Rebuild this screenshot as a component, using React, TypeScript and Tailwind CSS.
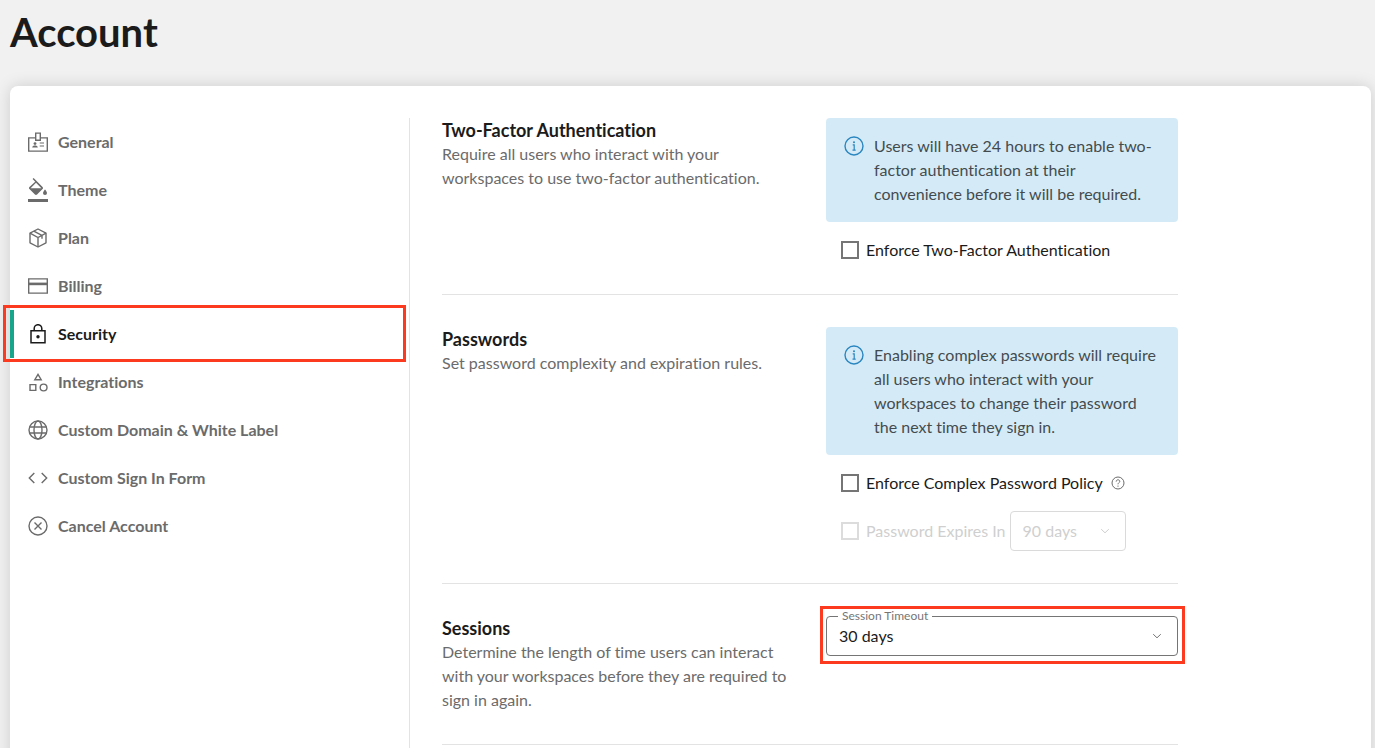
import React, { useState } from 'react';

interface NavItem {
  label: string;
  icon: React.ReactNode;
}

interface IconProps {
  children: React.ReactNode;
}

const Icon: React.FC<IconProps> = ({ children }) => (
  <svg width="20" height="20" viewBox="0 0 20 20" fill="none" stroke="currentColor" strokeWidth="1.4" aria-hidden="true">
    {children}
  </svg>
);

const navItems: NavItem[] = [
  {
    label: 'General',
    icon: (
      <Icon>
        <path d="M7.7 5.9H.7v13.2h18.6V5.9h-7" />
        <path d="M7.7 1.1h4.6v7.2H7.7z" />
        <circle cx="7" cy="11.6" r="1.4" fill="currentColor" stroke="none" />
        <path d="M4.2 15.5c.2-1.5 1.4-2 2.8-2s2.6.5 2.8 2z" fill="currentColor" stroke="none" />
        <path d="M11.7 11h4.3M11.7 14h4.3" strokeWidth="1.2" />
      </Icon>
    ),
  },
  {
    label: 'Theme',
    icon: (
      <svg width="20" height="24" viewBox="2 0 20 24" fill="currentColor" aria-hidden="true">
        <path d="M16.56 8.94 7.62 0 6.6 1.02l2.6 2.7-5.76 5.22c-.59.59-.59 1.54 0 2.12l5.5 5.5c.59.59 1.53.59 2.12 0l5.5-5.5c.59-.58.59-1.53 0-2.12zM4.6 10.2 10 4.7l5.4 5.5z" />
        <path d="M19 11.5s-2 2.17-2 3.5a2 2 0 0 0 4 0c0-1.33-2-3.5-2-3.5z" />
        <path d="M2 21h20v3H2z" />
      </svg>
    ),
  },
  {
    label: 'Plan',
    icon: (
      <Icon>
        <path d="m10 1 8 4.2v9.6L10 19l-8-4.200V5.200z" strokeLinejoin="round" />
        <path d="m2 5.200 8 4.300 8-4.300M10 9.500V19M5.800 3.200l8.200 4.300v3.300" />
      </Icon>
    ),
  },
  {
    label: 'Billing',
    icon: (
      <Icon>
        <path d="M.7 2.9h18.6v14.200H.7z" />
        <path d="M.7 7.9h18.600" strokeWidth="2.600" />
      </Icon>
    ),
  },
  {
    label: 'Security',
    icon: (
      <Icon>
        <path d="M3 6.700h14v12.100H3z" strokeWidth="1.500" />
        <path d="M6.200 6.700V4.500a3.800 3.800 0 0 1 7.600 0v2.200" strokeWidth="1.500" />
        <circle cx="10" cy="12.800" r="1.700" fill="currentColor" stroke="none" />
      </Icon>
    ),
  },
  {
    label: 'Integrations',
    icon: (
      <Icon>
        <path d="m10 2.300 3.200 5.400H6.800z" />
        <path d="M2 12.600h5.800v5.800H2z" />
        <circle cx="15.600" cy="15.500" r="3.400" />
      </Icon>
    ),
  },
  {
    label: 'Custom Domain & White Label',
    icon: (
      <Icon>
        <circle cx="10" cy="10" r="9" />
        <ellipse cx="10" cy="10" rx="4" ry="9" />
        <path d="M1.600 7h16.800M1.600 13h16.800" />
      </Icon>
    ),
  },
  {
    label: 'Custom Sign In Form',
    icon: (
      <Icon>
        <path d="M6.300 4.900 1.300 10l5 5.100M13.700 4.900l5 5.100-5 5.100" />
      </Icon>
    ),
  },
  {
    label: 'Cancel Account',
    icon: (
      <Icon>
        <circle cx="10" cy="10" r="9" />
        <path d="m6.500 6.500 7 7M13.500 6.500l-7 7" />
      </Icon>
    ),
  },
];

const Chevron = () => (
  <svg
    className="pointer-events-none absolute top-1/2 right-4 -translate-y-1/2"
    width="10"
    height="10"
    viewBox="0 0 10 10"
    fill="none"
    stroke="currentColor"
    aria-hidden="true"
  >
    <path d="M1.200 3.200 5 6.800l3.800-3.600" />
  </svg>
);

const Callout: React.FC<{ children: React.ReactNode }> = ({ children }) => (
  <div className="mb-4 flex gap-2.5 rounded bg-[#d4ebf7] py-4 pr-4 pl-[18px] text-[#444b4f]">
    <svg
      className="mt-0.5 shrink-0 text-[#2a86c0]"
      width="20"
      height="20"
      viewBox="0 0 20 20"
      fill="none"
      stroke="currentColor"
      strokeWidth="1.4"
      aria-hidden="true"
    >
      <circle cx="10" cy="10" r="9" />
      <path d="M8.700 8.800h1.500v5.400M8.500 14.200h3.200" strokeWidth="1.200" />
      <circle cx="10" cy="6.200" r="1" fill="currentColor" stroke="none" />
    </svg>
    <p>{children}</p>
  </div>
);

interface SectionProps {
  title: string;
  description: string;
  children: React.ReactNode;
}

const Section: React.FC<SectionProps> = ({ title, description, children }) => (
  <section className="mb-8 grid grid-cols-2 gap-8 border-b border-[#e3e3e3] pb-8">
    <div>
      <h2 className="text-lg leading-6 font-bold text-[#1b1b1b]">{title}</h2>
      <p>{description}</p>
    </div>
    <div>{children}</div>
  </section>
);

const checkboxClass =
  'size-[18px] shrink-0 appearance-none border-2 border-[#757575] bg-white checked:bg-[#17a58c] disabled:border-[#dcdcdc]';

export default function App() {
  const [active, setActive] = useState('Security');
  const [complex, setComplex] = useState(false);
  const [timeout, setTimeoutValue] = useState('30 days');

  return (
    <div className="flex min-h-screen flex-col bg-[#f1f1f1] pr-1 pl-2.5 font-['Lato',sans-serif] text-base leading-6 text-[#6b6b6b] [font-variant-ligatures:none]">
      <h1 className="pt-2 pb-[30px] text-[40px] leading-12 font-bold text-[#1b1b1b]">Account</h1>

      <main className="flex flex-1 rounded-t-lg bg-white pt-8 shadow-[0_0_16px_rgba(0,0,0,0.15)]">
        <nav className="w-[400px] shrink-0 border-r border-[#e3e3e3]" aria-label="Account settings">
          {navItems.map(({ label, icon }) => {
            const isActive = label === active;
            return (
              <a
                key={label}
                href="#"
                onClick={() => setActive(label)}
                aria-current={isActive ? 'page' : undefined}
                className={`relative flex h-12 items-center gap-2.5 border-l-4 pl-3.5 font-bold ${
                  isActive ? 'border-[#17a58c] text-[#1b1b1b]' : 'border-transparent'
                }`}
              >
                {icon}
                {label}
                {isActive && (
                  <span className="pointer-events-none absolute -top-[5px] right-[3px] -bottom-1 -left-[11px] border-3 border-[#fb3a20]" />
                )}
              </a>
            );
          })}
        </nav>

        <div className="ml-8 w-full max-w-[736px]">
          <Section
            title="Two-Factor Authentication"
            description="Require all users who interact with your workspaces to use two-factor authentication."
          >
            <Callout>
              Users will have 24 hours to enable two-factor authentication at their convenience before it will be required.
            </Callout>
            <label className="flex items-center gap-[7px] pl-[15px] text-[#1b1b1b]">
              <input type="checkbox" className={checkboxClass} />
              Enforce Two-Factor Authentication
            </label>
          </Section>

          <Section title="Passwords" description="Set password complexity and expiration rules.">
            <Callout>
              Enabling complex passwords will require all users who interact with your workspaces to change their password
              the next time they sign in.
            </Callout>
            <div className="mb-4 flex items-center gap-2 pl-[15px]">
              <label className="flex items-center gap-[7px] text-[#1b1b1b]">
                <input
                  type="checkbox"
                  checked={complex}
                  onChange={(e) => setComplex(e.target.checked)}
                  className={checkboxClass}
                />
                Enforce Complex Password Policy
              </label>
              <svg width="14" height="14" viewBox="0 0 14 14" fill="none" stroke="currentColor" aria-hidden="true">
                <circle cx="7" cy="7" r="6" />
                <path d="M5.200 5.600c0-1.100.8-1.800 1.800-1.800s1.800.6 1.800 1.600C8.800 6.600 7 6.700 7 8.300" />
                <circle cx="7" cy="10.100" r=".7" fill="currentColor" stroke="none" />
              </svg>
            </div>
            <div className="flex items-center gap-1 pl-[15px] text-[#cfcfcf]">
              <label className="flex items-center gap-[7px]">
                <input type="checkbox" disabled className={checkboxClass} />
                Password Expires In
              </label>
              <div className="relative">
                <select
                  disabled
                  aria-label="Password expiration"
                  className="h-10 w-[116px] appearance-none rounded border border-[#dadada] bg-white px-3 opacity-100"
                >
                  <option>90 days</option>
                </select>
                <Chevron />
              </div>
            </div>
          </Section>

          <Section
            title="Sessions"
            description="Determine the length of time users can interact with your workspaces before they are required to sign in again."
          >
            <div className="relative text-[#757575]">
              <label htmlFor="session-timeout" className="absolute -top-2 left-3 bg-white px-1 text-xs leading-4">
                Session Timeout
              </label>
              <select
                id="session-timeout"
                value={timeout}
                onChange={(e) => setTimeoutValue(e.target.value)}
                className="block h-10 w-full appearance-none rounded border border-[#757575] bg-white px-3 text-[#1b1b1b]"
              >
                <option>1 day</option>
                <option>7 days</option>
                <option>30 days</option>
              </select>
              <Chevron />
              <span className="pointer-events-none absolute -top-2.5 -right-[7px] -bottom-2 -left-1.5 border-3 border-[#fb3a20]" />
            </div>
          </Section>
        </div>
      </main>
    </div>
  );
}
